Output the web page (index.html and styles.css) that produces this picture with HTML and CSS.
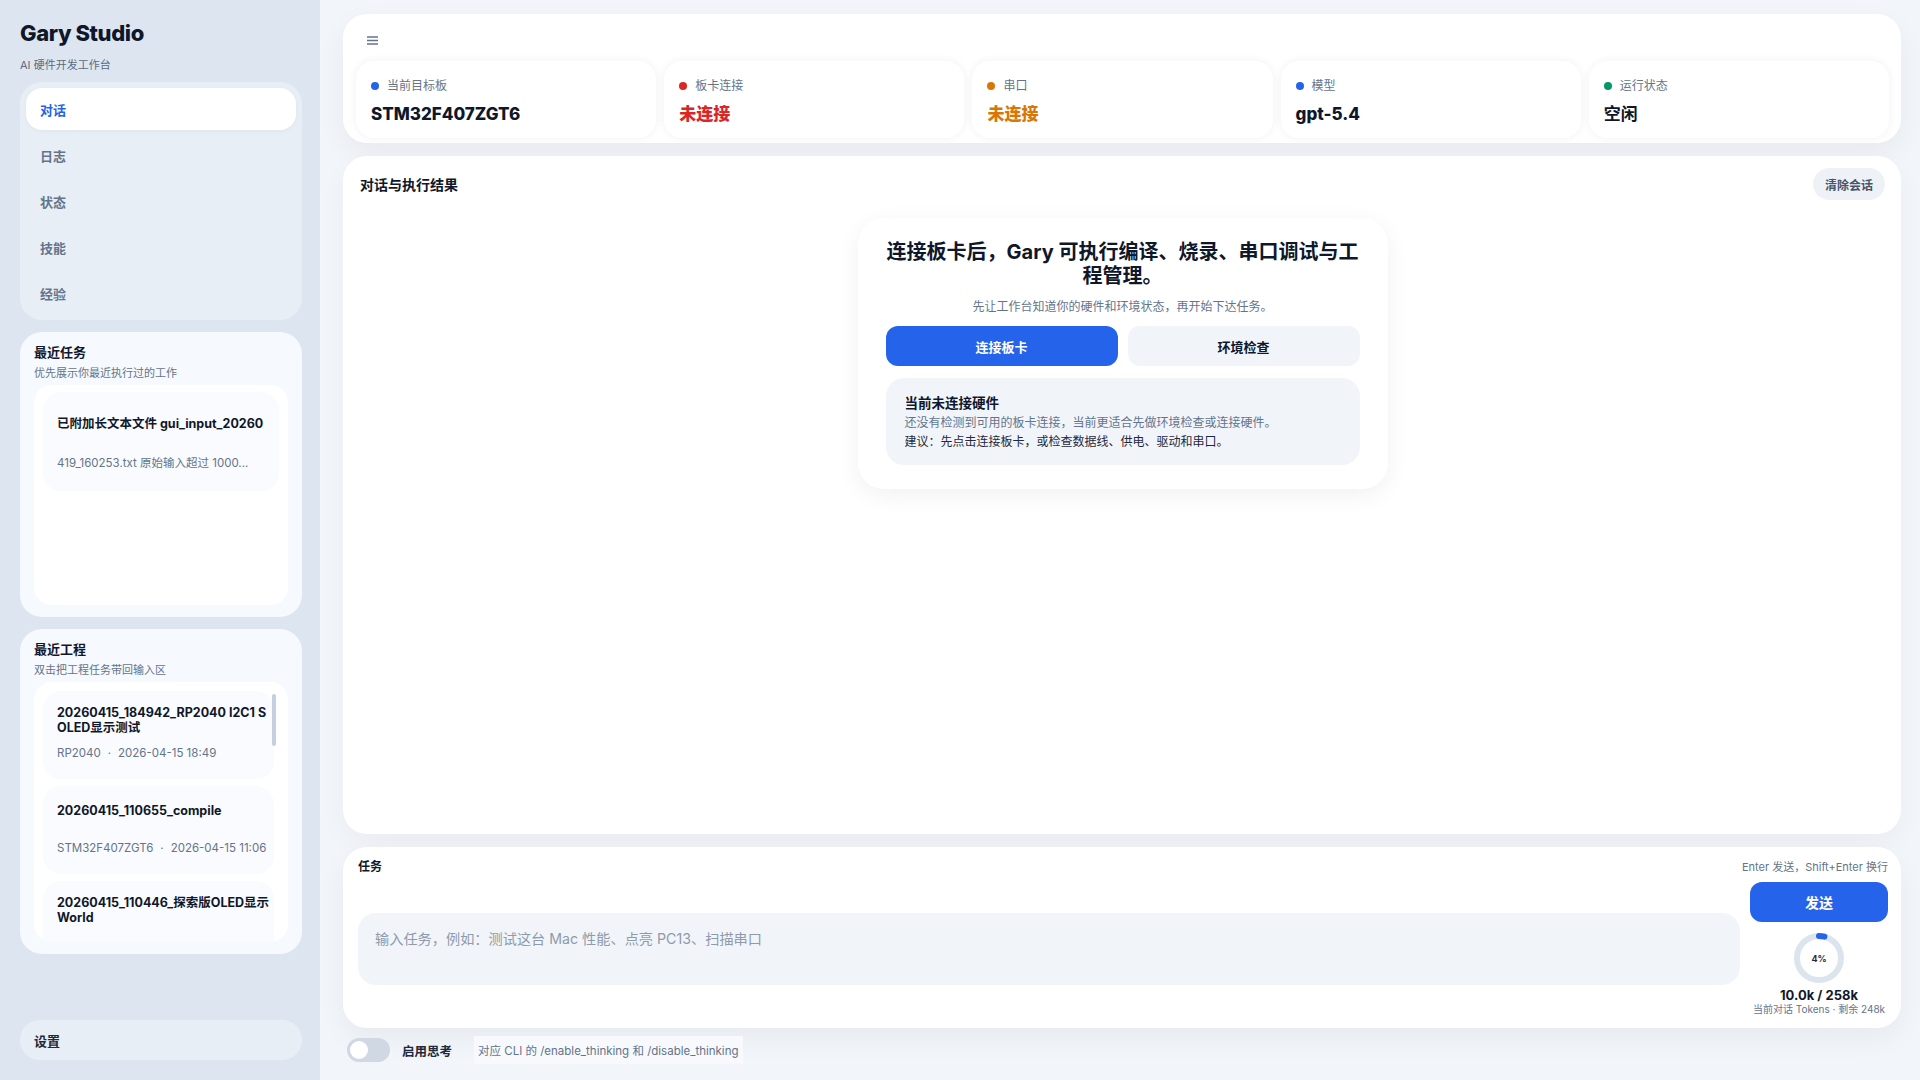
FILE: index.html
```html
<!DOCTYPE html>
<html lang="zh-CN">
<head>
    <meta charset="UTF-8">
    <meta name="viewport" content="width=device-width, initial-scale=1.0">
    <title>Gary Studio</title>
    <link rel="stylesheet" href="styles.css">
</head>
<body>
    <div class="app">
        <aside class="sidebar">
            <div class="brand">
                <h1>Gary Studio</h1>
                <p>AI 硬件开发工作台</p>
            </div>

            <nav class="nav">
                <a class="nav-item active">对话</a>
                <a class="nav-item">日志</a>
                <a class="nav-item">状态</a>
                <a class="nav-item">技能</a>
                <a class="nav-item">经验</a>
            </nav>

            <section class="panel">
                <h3>最近任务</h3>
                <p class="panel-sub">优先展示你最近执行过的工作</p>
                <div class="list task-list">
                    <div class="task-item">
                        <div class="task-title">已附加长文本文件 gui_input_20260</div>
                        <div class="item-meta">419_160253.txt 原始输入超过 1000...</div>
                    </div>
                </div>
            </section>

            <section class="panel">
                <h3>最近工程</h3>
                <p class="panel-sub">双击把工程任务带回输入区</p>
                <div class="list project-list">
                    <div class="project-item">
                        <div class="project-title"><span>20260415_184942_RP2040 I2C1 S<br>OLED显示测试</span></div>
                        <div class="item-meta">RP2040<span class="sep">·</span>2026-04-15 18:49</div>
                    </div>
                    <div class="project-item">
                        <div class="project-title"><span>20260415_110655_compile</span></div>
                        <div class="item-meta">STM32F407ZGT6<span class="sep">·</span>2026-04-15 11:06</div>
                    </div>
                    <div class="project-item">
                        <div class="project-title"><span>20260415_110446_探索版OLED显示<br>World</span></div>
                    </div>
                    <div class="scroll-thumb"></div>
                </div>
            </section>

            <button class="settings">设置</button>
        </aside>

        <main class="main">
            <header class="status-card">
                <div class="menu-row">
                    <svg width="11" height="9" viewBox="0 0 11 9">
                        <path d="M0 1h11M0 4.5h11M0 8h11" stroke="#64748b" stroke-width="1.3"/>
                    </svg>
                </div>
                <div class="chips">
                    <div class="chip">
                        <div class="chip-label"><span class="dot blue"></span>当前目标板</div>
                        <div class="chip-value">STM32F407ZGT6</div>
                    </div>
                    <div class="chip">
                        <div class="chip-label"><span class="dot red"></span>板卡连接</div>
                        <div class="chip-value red-text">未连接</div>
                    </div>
                    <div class="chip">
                        <div class="chip-label"><span class="dot orange"></span>串口</div>
                        <div class="chip-value orange-text">未连接</div>
                    </div>
                    <div class="chip">
                        <div class="chip-label"><span class="dot blue"></span>模型</div>
                        <div class="chip-value">gpt-5.4</div>
                    </div>
                    <div class="chip">
                        <div class="chip-label"><span class="dot green"></span>运行状态</div>
                        <div class="chip-value idle">空闲</div>
                    </div>
                </div>
            </header>

            <section class="chat-card">
                <div class="chat-head">
                    <h2>对话与执行结果</h2>
                    <button class="ghost-btn">清除会话</button>
                </div>

                <div class="empty-card">
                    <h2 class="empty-title">连接板卡后，Gary 可执行编译、烧录、串口调试与工程管理。</h2>
                    <p class="empty-sub">先让工作台知道你的硬件和环境状态，再开始下达任务。</p>
                    <div class="empty-actions">
                        <button class="primary-btn">连接板卡</button>
                        <button class="soft-btn">环境检查</button>
                    </div>
                    <div class="notice">
                        <div class="notice-title">当前未连接硬件</div>
                        <div class="notice-text">还没有检测到可用的板卡连接，当前更适合先做环境检查或连接硬件。</div>
                        <div class="notice-tip">建议：先点击连接板卡，或检查数据线、供电、驱动和串口。</div>
                    </div>
                </div>
            </section>

            <section class="composer">
                <div class="composer-head">
                    <span class="composer-label">任务</span>
                    <span class="composer-hint">Enter 发送，Shift+Enter 换行</span>
                </div>
                <div class="composer-body">
                    <textarea class="task-input" placeholder="输入任务，例如：测试这台 Mac 性能、点亮 PC13、扫描串口"></textarea>
                    <div class="side">
                        <button class="send-btn">发送</button>
                        <div class="ring">
                            <svg width="50" height="50" viewBox="0 0 50 50">
                                <circle cx="25" cy="25" r="22" fill="none" stroke="#dce4ee" stroke-width="6"/>
                                <circle cx="25" cy="25" r="22" fill="none" stroke="#2563eb" stroke-width="6"
                                        stroke-linecap="round" stroke-dasharray="5.5 200" transform="rotate(-90 25 25)"/>
                            </svg>
                            <span class="ring-text">4%</span>
                        </div>
                        <div class="tokens">10.0k / 258k</div>
                        <div class="tokens-sub">当前对话 Tokens · 剩余 248k</div>
                    </div>
                </div>
            </section>

            <div class="think-row">
                <span class="toggle"><span class="knob"></span></span>
                <span class="think-label">启用思考</span>
                <span class="think-hint">对应 CLI 的 /enable_thinking 和 /disable_thinking</span>
            </div>
        </main>
    </div>
</body>
</html>
```

FILE: styles.css
```css
/* Gary Studio layout */
* {
    box-sizing: border-box;
}

body {
    margin: 0;
    font-family: Inter, "Noto Sans CJK SC", sans-serif;
    color: #0f172a;
    background-color: #f2f5f9;
    height: 100vh;
    overflow: hidden;
}

button {
    font-family: inherit;
    border: none;
    cursor: pointer;
}

.app {
    display: flex;
    height: 100vh;
}

/* sidebar */
.sidebar {
    width: 320px;
    flex-shrink: 0;
    background-color: #dde6f0;
    padding: 19px 18px 20px 20px;
    display: flex;
    flex-direction: column;
}

.brand h1 {
    margin: 0;
    font-size: 22px;
    line-height: 28px;
    font-weight: 800;
    letter-spacing: -0.4px;
    color: #0f172a;
}

.brand p {
    margin: 10px 0 0;
    font-size: 11px;
    line-height: 16px;
    color: #5b6b80;
}

.nav {
    margin-top: 9px;
    background-color: #e8eef6;
    border-radius: 22px;
    padding: 6px;
    display: flex;
    flex-direction: column;
    gap: 4px;
}

.nav-item {
    height: 42px;
    display: flex;
    align-items: center;
    padding-left: 14px;
    border-radius: 16px;
    font-size: 13px;
    font-weight: 600;
    color: #64748b;
}

.nav-item.active {
    background-color: #fff;
    color: #2563eb;
    box-shadow: 0 1px 4px rgba(15, 23, 42, 0.04);
}

.panel {
    margin-top: 12px;
    background-color: #f6f9fd;
    border-radius: 22px;
    padding: 11px 14px 12px;
}

.panel h3 {
    margin: 0;
    font-size: 13px;
    line-height: 18px;
    font-weight: 700;
}

.panel-sub {
    margin: 4px 0 0;
    font-size: 11px;
    line-height: 16px;
    color: #64748b;
}

.list {
    margin-top: 4px;
    background-color: #fff;
    border-radius: 18px;
}

.task-list {
    height: 220px;
    padding: 7px 9px;
}

.task-item {
    background-color: #f9fbfe;
    border-radius: 18px;
    padding: 24px 14px 20px;
}

.task-title {
    font-size: 12.5px;
    line-height: 16px;
    font-weight: 700;
    white-space: nowrap;
    overflow: hidden;
}

.item-meta {
    font-size: 11.5px;
    line-height: 16px;
    color: #64748b;
    white-space: nowrap;
    overflow: hidden;
}

.task-item .item-meta {
    margin-top: 23px;
}

.sep {
    margin: 0 7px;
}

.project-list {
    height: 260px;
    padding: 9px 14px 0 9px;
    overflow: hidden;
    position: relative;
    display: flex;
    flex-direction: column;
    gap: 7px;
}

.project-item {
    flex-shrink: 0;
    height: 88px;
    background-color: #f9fbfe;
    border-radius: 18px;
    padding: 14px 0 18px 14px;
    display: flex;
    flex-direction: column;
}

.project-title {
    min-height: 21px;
    display: flex;
    align-items: center;
    font-size: 12.5px;
    line-height: 15px;
    font-weight: 700;
    white-space: nowrap;
    overflow: hidden;
}

.project-item .item-meta {
    margin-top: auto;
}

.scroll-thumb {
    position: absolute;
    right: 12px;
    top: 12px;
    width: 4px;
    height: 52px;
    border-radius: 2px;
    background-color: #c5d0de;
}

.settings {
    margin-top: auto;
    height: 40px;
    border-radius: 20px;
    background-color: #e8eef6;
    text-align: left;
    padding-left: 14px;
    font-size: 13px;
    font-weight: 700;
    color: #1e293b;
}

/* main column */
.main {
    flex: 1;
    min-width: 0;
    padding: 14px 19px 16px 23px;
    display: flex;
    flex-direction: column;
}

.status-card {
    height: 129px;
    flex-shrink: 0;
    background-color: #fff;
    border-radius: 24px;
    padding: 18px 12px 5px 13px;
    box-shadow: 0 10px 28px rgba(15, 23, 42, 0.05);
    overflow: hidden;
}

.menu-row {
    height: 16px;
    padding-left: 11px;
    display: flex;
    align-items: center;
}

.chips {
    margin-top: 13px;
    display: grid;
    grid-template-columns: repeat(5, 1fr);
    gap: 8px;
}

.chip {
    height: 77px;
    background-color: #fff;
    border-radius: 18px;
    padding: 17px 15px;
    box-shadow: 0 0 10px rgba(15, 23, 42, 0.06);
}

.chip-label {
    display: flex;
    align-items: center;
    gap: 8px;
    font-size: 12px;
    line-height: 16px;
    color: #64748b;
}

.dot {
    width: 8px;
    height: 8px;
    border-radius: 50%;
}

.dot.blue { background-color: #2563eb; }
.dot.red { background-color: #dc2626; }
.dot.orange { background-color: #d97706; }
.dot.green { background-color: #059669; }

.chip-value {
    margin-top: 9px;
    font-size: 17px;
    line-height: 22px;
    font-weight: 800;
    color: #0f172a;
}

.chip-value.idle {
    font-weight: 600;
}

.red-text { color: #dc2626; }
.orange-text { color: #d97706; }

.chat-card {
    flex: 1;
    margin-top: 13px;
    background-color: #fff;
    border-radius: 24px;
    padding: 12px 16px 0 17px;
    box-shadow: 0 10px 28px rgba(15, 23, 42, 0.04);
    display: flex;
    flex-direction: column;
}

.chat-head {
    display: flex;
    justify-content: space-between;
    align-items: center;
}

.chat-head h2 {
    margin: 0;
    font-size: 14px;
    font-weight: 700;
}

.ghost-btn {
    width: 72px;
    height: 32px;
    border-radius: 16px;
    background-color: #eef2f7;
    font-size: 12px;
    font-weight: 700;
    color: #475569;
}

.empty-card {
    align-self: center;
    width: 530px;
    margin-top: 18px;
    background-color: #fff;
    border-radius: 26px;
    padding: 22px 28px 24px;
    box-shadow: 0 6px 24px rgba(15, 23, 42, 0.06);
    text-align: center;
}

.empty-title {
    margin: 0;
    font-size: 20px;
    line-height: 24px;
    font-weight: 700;
    color: #0f172a;
}

.empty-sub {
    margin: 11px 0 0;
    font-size: 12px;
    line-height: 16px;
    color: #64748b;
}

.empty-actions {
    margin-top: 11px;
    display: grid;
    grid-template-columns: 1fr 1fr;
    gap: 10px;
}

.primary-btn,
.soft-btn {
    height: 40px;
    border-radius: 12px;
    font-size: 13px;
    font-weight: 700;
}

.primary-btn {
    background-color: #2563eb;
    color: #fff;
}

.soft-btn {
    background-color: #f1f5f9;
    color: #0f172a;
}

.notice {
    margin-top: 12px;
    background-color: #f1f5fa;
    border-radius: 18px;
    padding: 16px 19px 14px;
    text-align: left;
}

.notice-title {
    font-size: 13.5px;
    line-height: 19px;
    font-weight: 700;
}

.notice-text,
.notice-tip {
    font-size: 12px;
    line-height: 19px;
    color: #64748b;
}

.notice-tip {
    color: #1e293b;
}

/* composer */
.composer {
    flex-shrink: 0;
    margin-top: 13px;
    background-color: #fff;
    border-radius: 24px;
    padding: 12px 13px 13px 15px;
    box-shadow: 0 10px 28px rgba(15, 23, 42, 0.05);
}

.composer-head {
    display: flex;
    justify-content: space-between;
    align-items: center;
    line-height: 16px;
}

.composer-label {
    font-size: 12px;
    font-weight: 700;
}

.composer-hint {
    font-size: 11px;
    color: #64748b;
}

.composer-body {
    margin-top: 7px;
    display: grid;
    grid-template-columns: 1fr 138px;
    gap: 10px;
    align-items: center;
}

.task-input {
    height: 72px;
    resize: none;
    border: none;
    outline: none;
    background-color: #f1f5f9;
    border-radius: 18px;
    padding: 16px 17px;
    font-family: inherit;
    font-size: 14.2px;
    line-height: 20px;
    color: #0f172a;
}

.task-input::placeholder {
    color: #8f9aab;
}

.side {
    display: flex;
    flex-direction: column;
    align-items: center;
}

.send-btn {
    width: 100%;
    height: 40px;
    border-radius: 12px;
    background-color: #2563eb;
    color: #fff;
    font-size: 14px;
    font-weight: 700;
}

.ring {
    margin-top: 11px;
    width: 50px;
    height: 50px;
    position: relative;
}

.ring svg {
    display: block;
}

.ring-text {
    position: absolute;
    inset: 0;
    display: flex;
    align-items: center;
    justify-content: center;
    font-size: 9px;
    font-weight: 700;
    color: #1e293b;
}

.tokens {
    margin-top: 4px;
    font-size: 13px;
    line-height: 16px;
    font-weight: 700;
}

.tokens-sub {
    font-size: 10px;
    line-height: 12px;
    color: #64748b;
    white-space: nowrap;
}

/* thinking switch */
.think-row {
    flex-shrink: 0;
    margin-top: 8px;
    height: 28px;
    display: flex;
    align-items: center;
    padding-left: 4px;
}

.toggle {
    width: 43px;
    height: 24px;
    border-radius: 12px;
    background-color: #cfd8e3;
    padding: 3px;
}

.knob {
    display: block;
    width: 18px;
    height: 18px;
    border-radius: 50%;
    background-color: #fff;
}

.think-label {
    margin-left: 12px;
    font-size: 12.5px;
    font-weight: 700;
    color: #1e293b;
}

.think-hint {
    margin-left: 22px;
    padding: 6px 4px;
    background-color: #f7f9fc;
    font-size: 11.5px;
    color: #64748b;
}
```
